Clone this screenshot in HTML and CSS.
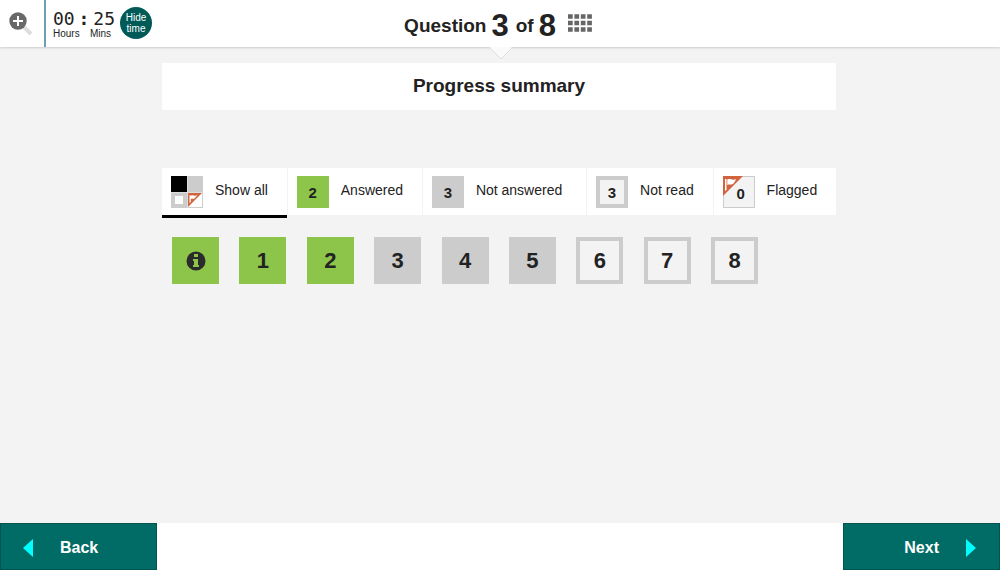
FILE: index.html
```html
<!DOCTYPE html>
<html lang="en">
<head>
<meta charset="utf-8">
<meta name="viewport" content="width=device-width, initial-scale=1">
<title>Progress summary</title>
<link rel="stylesheet" href="styles.css">
</head>
<body>
<header class="topbar">
  <div class="tools">
    <button class="zoom" type="button" aria-label="Zoom in">
      <svg width="26" height="26" viewBox="0 0 26 26">
        <path d="M15 15L23 23" stroke="#ddd" stroke-width="4"/>
        <circle cx="10" cy="10" r="8.700" fill="#686868"/>
        <path d="M10 5V15M5 10H15" stroke="#fff" stroke-width="2"/>
      </svg>
    </button>
    <div class="timer">
      <div class="clock"><span>00</span><b>:</b><span>25</span></div>
      <div class="units"><span>Hours</span><span>Mins</span></div>
    </div>
    <button class="hide-time" type="button">Hide time</button>
  </div>
  <div class="position">
    <span>Question</span><span class="big">3</span><span class="of">of</span><span class="big">8</span>
    <button class="grid-button" type="button" aria-label="Progress summary">
      <svg width="24" height="18" viewBox="0 0 24 18">
        <path d="M0 2.500H24M0 9H24M0 15.500H24" stroke="#666" stroke-width="4.600" stroke-dasharray="4.700 1.700"/>
      </svg>
    </button>
  </div>
  <svg class="pointer" width="22" height="13" viewBox="0 0 22 13">
    <path d="M0 1L11 12L22 1" fill="#fafafa" stroke="#ddd"/>
    <path d="M0 0H22L11 11Z" fill="#fafafa"/>
  </svg>
</header>

<main class="content">
  <h1 class="title">Progress summary</h1>

  <nav class="filters" aria-label="Filter questions">
    <button class="filter selected" type="button">
      <svg width="32" height="32" viewBox="0 0 32 32">
        <path d="M0 0H32V32H0Z" fill="#ccc"/>
        <path d="M16.500 32V0M0 16.500H32" stroke="#ddd"/>
        <path d="M0 0H16V16H0Z" fill="#000"/>
        <path d="M4 20H12V28H4Z" fill="#fff"/>
        <path d="M17 17H31V31H17Z" fill="#fff"/>
        <path d="M17 17H31L17 31Z" fill="#d2633f"/>
        <path d="M18.500 27V19H19.500V20C22 18 23 21 26.500 19L23.500 22.500C22 23.500 21 22 19.800 23V26Z" fill="#fff"/>
      </svg>
      <span class="label">Show all</span>
    </button>
    <button class="filter" type="button"><b class="chip answered">2</b><span class="label">Answered</span></button>
    <button class="filter wide" type="button"><b class="chip unanswered">3</b><span class="label">Not answered</span></button>
    <button class="filter" type="button"><b class="chip unread">3</b><span class="label">Not read</span></button>
    <button class="filter" type="button">
      <b class="chip flagged">
        <svg class="flag" width="20" height="20" viewBox="0 0 20 20">
          <path d="M0 0H20L0 20Z" fill="#d2633f"/>
          <path d="M2 15V3H3.500V14Z" fill="#fff"/>
          <path d="M4.300 3.500C7 1.800 9 5 13.500 3C12 4.300 12 6 10.500 7.500C8 9.500 6.500 7.500 4.300 9Z" fill="#fff"/>
        </svg>0</b>
      <span class="label">Flagged</span>
    </button>
  </nav>

  <div class="questions">
    <button class="question answered" type="button" aria-label="Information">
      <svg width="20" height="20" viewBox="0 0 20 20">
        <circle cx="10" cy="10" r="9.500" fill="#2b2b2b"/>
        <path d="M8 3H12V6H8ZM7 8H12V14H13V16H7V14H8V10H7Z" fill="#8cc54a"/>
      </svg>
    </button>
    <button class="question answered" type="button">1</button>
    <button class="question answered" type="button">2</button>
    <button class="question unanswered" type="button">3</button>
    <button class="question unanswered" type="button">4</button>
    <button class="question unanswered" type="button">5</button>
    <button class="question unread" type="button">6</button>
    <button class="question unread" type="button">7</button>
    <button class="question unread" type="button">8</button>
  </div>
</main>

<footer class="bottombar">
  <button class="step" type="button">
    <svg width="10" height="18" viewBox="0 0 10 18"><path d="M10 0V18L0 9Z" fill="#0ff"/></svg>
    <span>Back</span>
  </button>
  <button class="step next" type="button">
    <span>Next</span>
    <svg width="10" height="18" viewBox="0 0 10 18"><path d="M0 0V18L10 9Z" fill="#0ff"/></svg>
  </button>
</footer>
</body>
</html>
```
FILE: styles.css
```css
* { box-sizing: border-box; }
body {
  margin: 0;
  min-height: 100vh;
  display: flex;
  flex-direction: column;
  background: #f3f3f3;
  color: #222;
  font-family: "Liberation Sans", Arial, sans-serif;
}
button {
  margin: 0;
  padding: 0;
  border: 0;
  background: none;
  color: inherit;
  font: inherit;
  cursor: pointer;
}
svg { display: block; flex: none; }

.topbar {
  position: relative;
  display: grid;
  grid-template-columns: 1fr auto 1fr;
  height: 47px;
  background: #fff;
  box-shadow: 0 1px 2px #ccc;
}
.tools { display: flex; align-items: center; }
.zoom {
  align-self: stretch;
  display: flex;
  align-items: center;
  width: 46px;
  padding-left: 8px;
  border-right: 2px solid #6d9fb5;
}
.timer { padding: 0 5px 0 7px; }
.clock {
  display: flex;
  justify-content: space-between;
  width: 62px;
  font: 18px/20px "DejaVu Sans Mono", monospace;
}
.units {
  display: flex;
  justify-content: space-between;
  width: 58px;
  font-size: 10px;
  line-height: 10px;
}
.hide-time {
  width: 32px;
  height: 32px;
  margin-bottom: 2px;
  border-radius: 50%;
  background: #005a58;
  color: #fff;
  font-size: 10px;
  line-height: 11px;
}
.position {
  display: flex;
  align-items: center;
  padding: 4px 4px 0 0;
  font-size: 19px;
  font-weight: bold;
}
.big { margin-left: 5px; font-size: 31px; }
.of { margin-left: 7px; }
.grid-button { margin: 0 0 6px 12px; }
.pointer {
  position: absolute;
  top: 100%;
  left: 50%;
  margin-left: -10px;
}

.content {
  flex: 1;
  width: 100%;
  max-width: 676px;
  margin: 0 auto;
  padding: 16px 2px 0 0;
}
.title {
  margin: 0 0 58px;
  padding-bottom: 2px;
  background: #fff;
  font-size: 19px;
  line-height: 45px;
  text-align: center;
}
.filters {
  display: flex;
  flex-wrap: wrap;
  gap: 1px;
  align-items: flex-start;
}
.filter {
  flex: 2 1 auto;
  display: flex;
  align-items: center;
  gap: 12px;
  height: 47px;
  padding: 0 9px;
  background: #fff;
  font-size: 14px;
  white-space: nowrap;
}
.wide { flex-grow: 3; }
.label { padding-bottom: 3px; }
.selected {
  height: 50px;
  border-bottom: 3px solid #000;
}
.chip {
  position: relative;
  width: 32px;
  height: 32px;
  padding-top: 2px;
  font-size: 15px;
  line-height: 30px;
  text-align: center;
}
.flagged {
  padding-left: 4px;
  border: 1px solid #ccc;
  background: #f3f3f3;
}
.flag { position: absolute; top: -1px; left: -1px; }
.answered { background: #8cc54a; }
.unanswered { background: #ccc; }
.unread { border: 4px solid #ccc; background: #f3f3f3; }
.chip.unread { line-height: 22px; }

.questions {
  display: flex;
  flex-wrap: wrap;
  justify-content: space-between;
  max-width: 606px;
  padding: 19px 10px;
}
.question {
  display: flex;
  align-items: center;
  justify-content: center;
  width: 47px;
  height: 47px;
  font-size: 22px;
  font-weight: bold;
}

.bottombar {
  display: flex;
  justify-content: space-between;
  background: #fff;
}
.step {
  display: flex;
  align-items: center;
  gap: 27px;
  width: 157px;
  height: 47px;
  padding: 2px 23px 0 22px;
  border: 1px solid #00564f;
  background: #006c65;
  color: #fff;
  font-size: 16px;
  font-weight: bold;
}
.next { justify-content: flex-end; }
```
